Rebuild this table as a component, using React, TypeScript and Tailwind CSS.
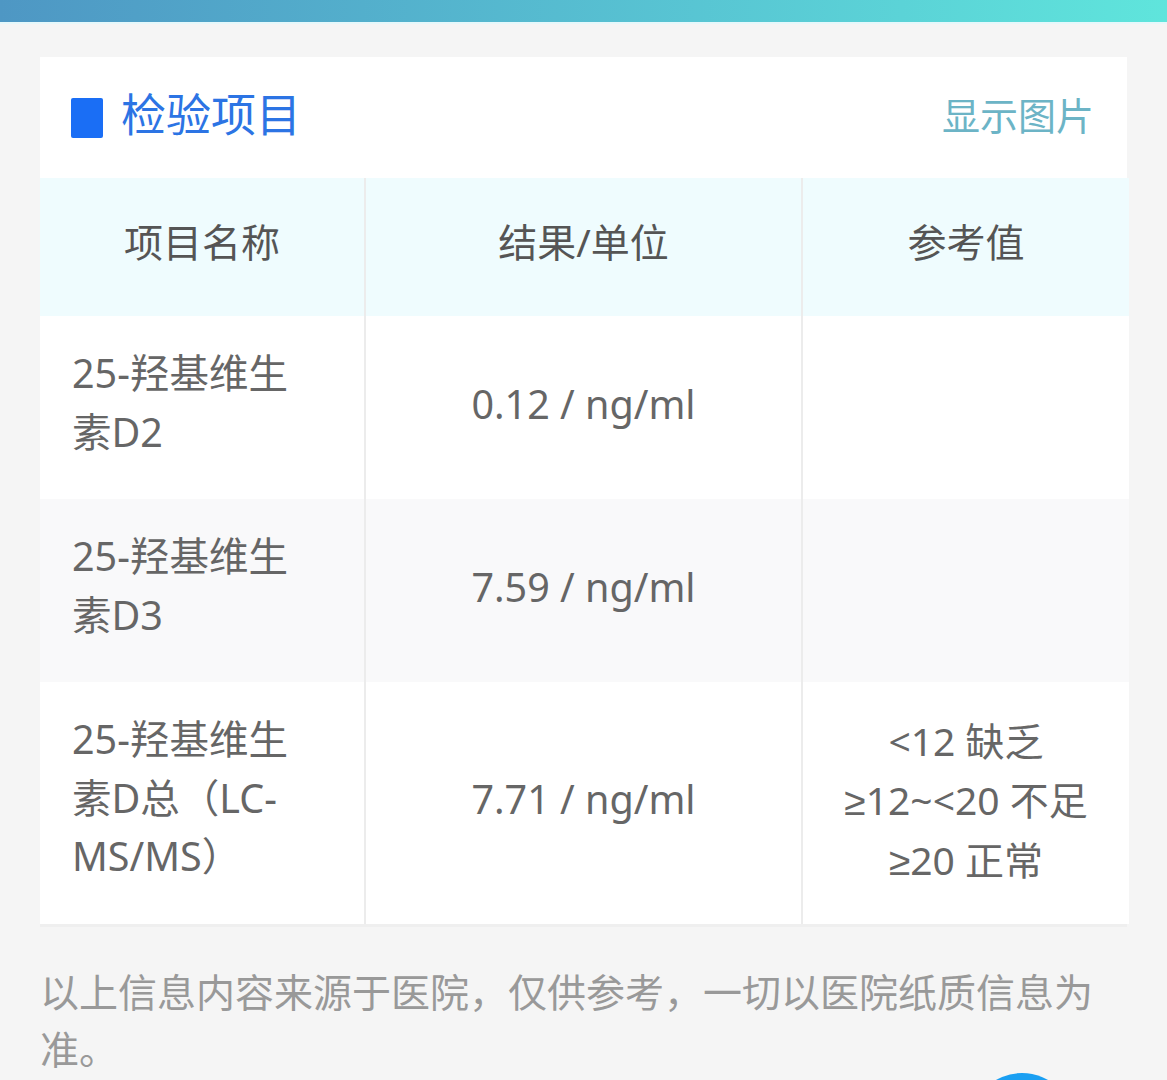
const rows = [
  { name: '25-羟基维生素D2', value: '0.12 / ng/ml', ref: [] as string[], bg: 'bg-white' },
  { name: '25-羟基维生素D3', value: '7.59 / ng/ml', ref: [] as string[], bg: 'bg-[#f9f9fa]' },
  {
    name: '25-羟基维生素D总（LC-MS/MS）',
    value: '7.71 / ng/ml',
    ref: ['<12 缺乏', '≥12~<20 不足', '≥20 正常'],
    bg: 'bg-white',
  },
];

const font = "font-['Noto_Sans','Noto_Sans_CJK_SC',sans-serif]";

// the CJK face draws ≥ slanted; take it from Liberation Sans
const RefLine = ({ text }: { text: string }) => {
  if (!text.startsWith('≥')) return <span>{text}</span>;
  return (
    <span>
      <span className="font-['Liberation_Sans',sans-serif]">≥</span>
      {text.slice(1)}
    </span>
  );
};

const App = () => {
  return (
    <div className={`relative h-[1080px] overflow-hidden bg-[#f5f5f5] ${font}`}>
      <div className="h-[22px] bg-gradient-to-r from-[#4e97c4] to-[#5fe5dc]" />
      <div className="h-[2px] bg-[#e6f8fb]" />

      <section className="mx-[40px] mt-[33px] bg-white">
        <div className="flex h-[121px] items-center justify-between pb-[6px] pl-[31px] pr-[33px]">
          <div className="flex items-center gap-[18px]">
            <span className="mt-[6px] h-[40px] w-[32px] rounded-[2px] bg-[#1a6ef5]" />
            <h2 className="text-[45px] leading-none text-[#2c74e4]">检验项目</h2>
          </div>
          <button className="text-[38px] leading-none text-[#6cb4c6]">显示图片</button>
        </div>

        <div className="grid grid-cols-[326px_437px_326px] border-b-[3px] border-[#efefef]">
          <div className="flex h-[138px] items-center justify-center border-r-2 border-[#ececec] bg-[#effcfe] pb-[10px] text-[39px] text-[#555]">
            项目名称
          </div>
          <div className="flex h-[138px] items-center justify-center border-r-2 border-[#ececec] bg-[#effcfe] pb-[10px] text-[39px] text-[#555]">
            结果/单位
          </div>
          <div className="flex h-[138px] items-center justify-center bg-[#effcfe] pb-[10px] text-[39px] text-[#555]">
            参考值
          </div>

          {rows.map((row, i) => (
            <div key={i} className="contents">
              <div
                className={`border-r-2 border-[#ececec] ${row.bg} pb-[38px] pl-[32px] pr-[50px] pt-[28px] text-[39.5px] leading-[58.5px] text-[#666]`}
              >
                {row.name}
              </div>
              <div
                className={`flex items-center justify-center border-r-2 border-[#ececec] ${row.bg} pb-[6px] text-[39.5px] text-[#666]`}
              >
                {row.value}
              </div>
              <div
                className={`flex flex-col items-center justify-center ${row.bg} pb-[2px] text-[39px] leading-[58.5px] text-[#666]`}
              >
                {row.ref.map((r) => (
                  <RefLine key={r} text={r} />
                ))}
              </div>
            </div>
          ))}
        </div>
      </section>

      <p className="mx-[40px] mt-[36px] text-[39px] leading-[57px] text-[#999]">
        以上信息内容来源于医院，仅供参考，一切以医院纸质信息为准。
      </p>

      <div className="absolute left-[970px] top-[1073px] h-[104px] w-[104px] rounded-full bg-[#1a9ff2]" />
    </div>
  );
};

export default App;
